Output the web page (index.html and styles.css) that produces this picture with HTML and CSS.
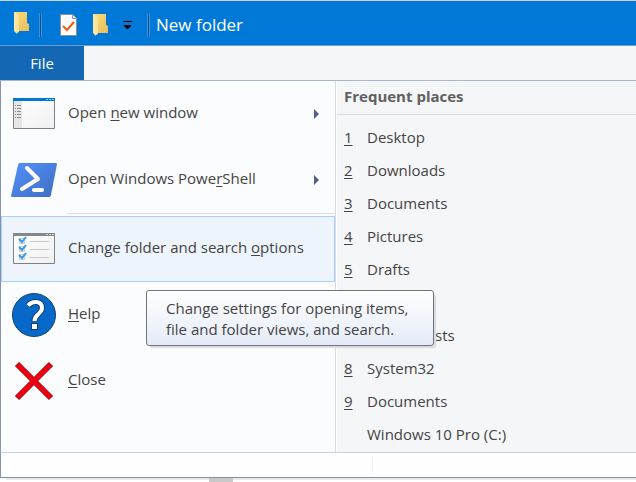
FILE: index.html
```html
<!DOCTYPE html>
<html lang="en">
<head>
<meta charset="utf-8">
<title>New folder</title>
<link rel="stylesheet" href="styles.css">
</head>
<body>
<svg width="0" height="0" class="defs" aria-hidden="true">
  <defs>
    <linearGradient id="gFront" x1="0" x2="1"><stop offset="0" stop-color="#ffecaa"/><stop offset="1" stop-color="#fbe08a"/></linearGradient>
    <linearGradient id="gBack" x1="0" x2="1" y2="1"><stop offset="0" stop-color="#fbdc81"/><stop offset="1" stop-color="#e9bd55"/></linearGradient>
    <linearGradient id="gShell" x1="0" y1="0" x2="1" y2="1"><stop offset="0" stop-color="#5391fe"/><stop offset="1" stop-color="#3e6dbf"/></linearGradient>
    <linearGradient id="gPane" x1="0" y1="0" x2="1" y2="1"><stop offset="0" stop-color="#fff"/><stop offset="1" stop-color="#f0f0f0"/></linearGradient>
    <symbol id="folder" viewBox="0 0 15 22">
      <path fill="url(#gBack)" d="M0 0H13V11L15 12V19H3Z"/>
      <path fill="url(#gFront)" d="M0 0L5 3V20L3 21V22L0 19Z"/>
    </symbol>
  </defs>
</svg>
<div class="window">
  <header class="titlebar">
    <svg class="folder folder-app" aria-hidden="true"><use href="#folder"/></svg>
    <span class="divider divider-first"></span>
    <button class="quick" aria-label="Properties">
      <svg width="17" height="22" viewBox="0 0 17 22">
        <path d="M.5 .5H12.500L16.500 4.500V21.500H.5Z" fill="#fcfcfc" stroke="#8c9199"/>
        <path d="M12.500 .5V4.500H16.500" fill="#e4e4e4" stroke="#8c9199"/>
        <path d="M3 12L7 16L14 8" fill="none" stroke="#f05a14" stroke-width="2"/>
      </svg>
    </button>
    <button class="quick quick-folder" aria-label="New folder"><svg class="folder"><use href="#folder"/></svg></button>
    <button class="quick quick-more" aria-label="Customize toolbar">
      <svg width="9" height="8" viewBox="0 0 9 8"><path d="M0 .5H9" stroke="#000"/><path d="M1 4H8V5L5 8H4L1 5Z" fill="#000"/></svg>
    </button>
    <span class="divider"></span>
    <h1 class="title">New folder</h1>
  </header>
  <nav class="tabs"><button class="tab">File</button></nav>
  <main class="panels">
    <div class="menu">
      <button class="item">
        <svg class="icon" width="46" height="44" viewBox="0 0 46 44" aria-hidden="true">
          <path d="M2.500 6.500H43.500V36.500H2.500Z" fill="url(#gPane)" stroke="#808080"/>
          <path d="M3 9H11V36H3Z" fill="#e6e6e6"/>
          <path d="M2 6H44V9H2Z" fill="#0078d7"/>
          <path d="M35 7.500H43" stroke="#8cc5f5" stroke-dasharray="2 1"/>
          <path d="M4.500 13V26" stroke="#8a8a8a" stroke-dasharray="1 2"/>
          <path d="M6 13.500H10M6 16.500H10M6 19.500H10M6 22.500H10M6 25.500H10" stroke="#8a8a8a"/>
        </svg>
        <span class="label">Open <u>n</u>ew window</span>
        <svg class="arrow" width="5" height="10" viewBox="0 0 5 10" aria-hidden="true"><path d="M0 0L5 5L0 10Z" fill="#4d6285"/></svg>
      </button>
      <button class="item">
        <svg class="icon" width="46" height="44" viewBox="0 0 46 44" aria-hidden="true">
          <path d="M9 5H45Q46 5 46 6L40 37Q39.500 39 38 39H1Q0 39 0 38L7 7Q7.500 5 9 5Z" fill="url(#gShell)"/>
          <path d="M16 10L27 21L11 31" fill="none" stroke="#fff" stroke-width="4" stroke-linecap="round" stroke-linejoin="round"/>
          <path d="M23 32H31" stroke="#fff" stroke-width="4" stroke-linecap="round"/>
        </svg>
        <span class="label">Open Windows Powe<u>r</u>Shell</span>
        <svg class="arrow" width="5" height="10" viewBox="0 0 5 10" aria-hidden="true"><path d="M0 0L5 5L0 10Z" fill="#4d6285"/></svg>
      </button>
      <hr class="rule">
      <div class="anchor">
        <button class="item item-active" aria-describedby="tip">
          <svg class="icon" width="46" height="44" viewBox="0 0 46 44" aria-hidden="true">
            <path d="M2.500 6.500H43.500V36.500H2.500Z" fill="url(#gPane)" stroke="#808080"/>
            <path d="M2 6H44V9H2Z" fill="#858888"/>
            <path d="M35 7.500H43" stroke="#d5d5d5" stroke-dasharray="2 1"/>
            <path d="M19 14.500H38M19 22.500H38M19 30.500H38" stroke="#c6c6c6"/>
            <path d="M8.500 11.500H13.500V16.500H8.500ZM8.500 19.500H13.500V24.500H8.500ZM8.500 27.500H13.500V32.500H8.500Z" fill="#f6f6f6" stroke="#ccc"/>
            <path d="M8 12L11 15L15 10M8 20L11 23L15 18M8 28L11 31L15 26" fill="none" stroke="#3399e8" stroke-width="2"/>
          </svg>
          <span class="label">Change folder and search <u>o</u>ptions</span>
        </button>
        <div class="tooltip" role="tooltip" id="tip">Change settings for opening items,<br>file and folder views, and search.</div>
      </div>
      <button class="item">
        <svg class="icon" width="46" height="44" viewBox="0 0 46 44" aria-hidden="true">
          <circle cx="23" cy="22" r="21.500" fill="#0669c9" stroke="#15436f"/>
          <path d="M17 12.500C22 7 31 8 31 15C31 21 23.500 21 23.500 28" fill="none" stroke="#123f6d" stroke-width="6"/>
          <path d="M20 30H27V37H20Z" fill="#123f6d"/>
          <path d="M17 12.500C22 7 31 8 31 15C31 21 23.500 21 23.500 28" fill="none" stroke="#fff" stroke-width="4"/>
          <path d="M21 31H26V36H21Z" fill="#fff"/>
        </svg>
        <span class="label"><u>H</u>elp</span>
      </button>
      <button class="item">
        <svg class="icon" width="46" height="44" viewBox="0 0 46 44" aria-hidden="true">
          <path d="M6 5L40 39M40 5L6 39" stroke="#a00e18" stroke-width="6"/>
          <path d="M6.500 5.500L39.500 38.500M39.500 5.500L6.500 38.500" stroke="#e60012" stroke-width="5"/>
        </svg>
        <span class="label"><u>C</u>lose</span>
      </button>
    </div>
    <section class="places">
      <h2 class="heading">Frequent places</h2>
      <ul class="list">
        <li><a class="place" href="#"><u>1</u><span>Desktop</span></a></li>
        <li><a class="place" href="#"><u>2</u><span>Downloads</span></a></li>
        <li><a class="place" href="#"><u>3</u><span>Documents</span></a></li>
        <li><a class="place" href="#"><u>4</u><span>Pictures</span></a></li>
        <li><a class="place" href="#"><u>5</u><span>Drafts</span></a></li>
        <li class="place"></li>
        <li><a class="place place-covered" href="#"><span>sts</span></a></li>
        <li><a class="place" href="#"><u>8</u><span>System32</span></a></li>
        <li><a class="place" href="#"><u>9</u><span>Documents</span></a></li>
        <li><a class="place" href="#"><i></i><span>Windows 10 Pro (C:)</span></a></li>
      </ul>
    </section>
  </main>
  <footer class="footer"><span class="grip"></span></footer>
</div>
<div class="below"></div>
</body>
</html>
```
FILE: styles.css
```css
* { box-sizing: border-box; }
body {
  margin: 0;
  overflow: hidden;
  background: #fff;
  color: #444;
  font: 15px/21px "Open Sans", "Noto Sans", sans-serif;
}
button {
  border: 0;
  padding: 0;
  background: none;
  color: inherit;
  font: inherit;
  text-align: left;
}
u { text-underline-offset: 2px; text-decoration-thickness: 1px; text-decoration-skip-ink: none; }
svg { display: block; flex: none; }
.defs { position: absolute; }
.window { border-top: 1px solid #ccd3da; }
.titlebar {
  display: flex;
  align-items: center;
  height: 45px;
  padding: 4px 14px 0;
  background: #0078d7;
  border-bottom: 1px solid #6b9ccc;
  color: #fff;
}
.folder { width: 15px; height: 22px; }
.folder-app { margin-bottom: 4px; }
.divider {
  width: 3px;
  height: 24px;
  border: solid #3d94dd;
  border-width: 0 1px;
  background: #0b4f8c;
}
.divider-first { margin: 0 18px 0 10px; }
.quick-folder { margin: 0 15px 0 16px; }
.quick-more { margin-right: 15px; }
.title { margin: 0 0 0 6px; font-size: 17px; line-height: 24px; font-weight: 400; }
.tabs {
  display: flex;
  height: 35px;
  background: #f5f6f8;
  border-bottom: 1px solid #a8b5cf;
}
.tab { width: 84px; background: #1467b3; color: #fff; text-align: center; }
.panels {
  display: flex;
  border-left: 1px solid #8593ad;
  border-bottom: 1px solid #c3d3e8;
}
.menu { flex: 0 0 335px; background: #fbfcfe; border-right: 1px solid #d9dbde; }
.item {
  display: flex;
  align-items: center;
  width: 100%;
  height: 66px;
  padding: 0 16px 0 10px;
  gap: 11px;
}
.label { flex: 1; padding-bottom: 4px; white-space: nowrap; }
.item-active {
  background: #edf4fc;
  border: 1px solid #a6d0f8;
  padding-left: 9px;
}
.rule { height: 1px; margin: 0 0 2px 66px; border: 0; background: #dcdee0; }
.anchor { position: relative; }
.tooltip {
  position: absolute;
  left: 145px;
  top: 74px;
  padding: 7px 24px 5px 19px;
  border: 1px solid #70757c;
  border-radius: 3px;
  background: linear-gradient(#fff, #e4ebf7);
  box-shadow: 3px 3px 1px -1px #d8dadd;
  white-space: nowrap;
}
.places { flex: 1; background: #f5f6f8; border-left: 1px solid #fff; }
.heading {
  margin: 0;
  padding: 5px 7px 7px;
  border-bottom: 1px solid #d9dbde;
  color: #606060;
  font-size: 15px;
  line-height: 21px;
  font-weight: 700;
}
.list { margin: 0; padding: 6px 0 1px; list-style: none; }
.place {
  display: grid;
  grid-template-columns: 23px 1fr;
  align-items: center;
  height: 33px;
  padding-left: 7px;
  color: inherit;
  text-decoration: none;
}
.place-covered { display: flex; padding-left: 98px; }
.footer {
  display: flex;
  align-items: center;
  height: 25px;
  padding-left: 371px;
  border-left: 1px solid #8593ad;
  border-bottom: 1px solid #8090a8;
}
.grip { width: 1px; height: 16px; background: #eee; }
.below {
  height: 4px;
  margin-left: 6px;
  background: linear-gradient(90deg, transparent 203px, #c8c8c8 203px, #c8c8c8 227px, transparent 227px), linear-gradient(#eaeaea 2px, #fff 2px);
}
```
